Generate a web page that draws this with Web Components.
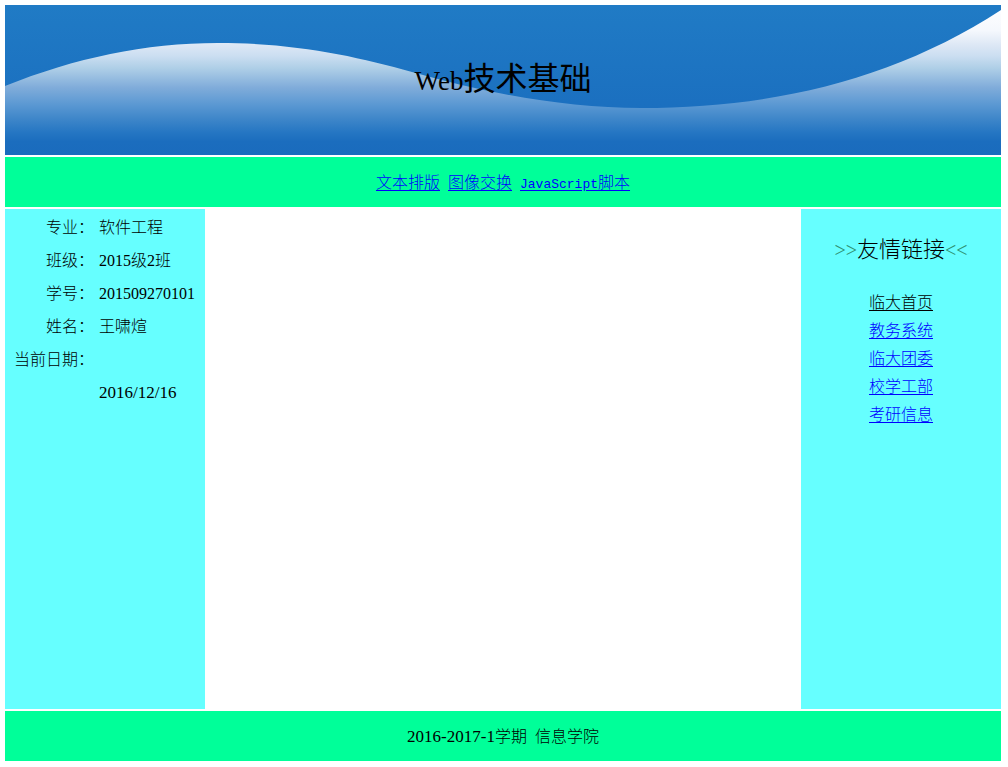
<!DOCTYPE html>
<html lang="zh-CN">
<head>
<meta charset="utf-8">
<title>Web技术基础</title>
<style>
body {
  margin: 0;
  background: #fff;
  color: #000;
  font: 300 16px/20px "Liberation Serif", "Noto Sans CJK SC", serif;
}
</style>
</head>
<body>
<course-page>
  <page-banner slot="banner"><span slot="latin">Web</span>技术基础</page-banner>
  <page-nav slot="nav"></page-nav>
  <student-card slot="left"></student-card>
  <friend-links slot="right"></friend-links>
  <page-footer slot="footer"><span slot="term">2016-2017-1</span>信息学院</page-footer>
</course-page>

<script>
function define(name, html) {
  const template = document.createElement('template');
  template.innerHTML = html;
  customElements.define(name, class extends HTMLElement {
    constructor() {
      super();
      this.attachShadow({ mode: 'open' }).append(template.content.cloneNode(true));
    }
  });
}

define('course-page', `
<style>
  :host { display: flex; flex-direction: column; gap: 2px; box-sizing: border-box; min-height: 100vh; padding: 5px 7px 6px 5px; }
  .columns { display: grid; grid-template-columns: 200px 1fr 200px; flex: 1; }
</style>
<slot name="banner"></slot>
<slot name="nav"></slot>
<div class="columns">
  <slot name="left"></slot>
  <main></main>
  <slot name="right"></slot>
</div>
<slot name="footer"></slot>`);

define('page-banner', `
<style>
  :host { display: grid; place-items: center; position: relative; height: 150px; }
  svg { position: absolute; inset: 0; width: 100%; height: 100%; }
  h1 { position: relative; margin: 0; font-size: 32px; line-height: 40px; font-weight: 400; }
  ::slotted(span) { font-size: 27px; }
</style>
<svg viewBox="0 0 996 150" preserveAspectRatio="none" aria-hidden="true">
  <defs>
    <linearGradient id="sky" x1="0" y1="0" x2="0" y2="1">
      <stop offset="0" stop-color="#207bc5"/><stop offset=".65" stop-color="#1b70c0"/><stop offset="1" stop-color="#1a6bbd"/>
    </linearGradient>
    <linearGradient id="wave" gradientUnits="userSpaceOnUse" x1="0" y1="0" x2="0" y2="150">
      <stop offset="0" stop-color="#fff"/><stop offset=".17" stop-color="#f5f8fd"/>
      <stop offset=".27" stop-color="#dce7f5"/><stop offset=".34" stop-color="#cbdef1"/>
      <stop offset=".42" stop-color="#afcfe7"/><stop offset=".55" stop-color="#80acda"/>
      <stop offset=".66" stop-color="#5c99d3"/><stop offset=".76" stop-color="#3e86c9"/>
      <stop offset=".85" stop-color="#2576c3"/><stop offset=".91" stop-color="#1b6dbe"/><stop offset="1" stop-color="#1a6bbd"/>
    </linearGradient>
  </defs>
  <path fill="url(#sky)" d="M0 0H996V150H0Z"/>
  <path fill="url(#wave)" d="M0 81C70 53 140 38 213 38C290 38 350 51 407 67C480 88 560 103 636 103C770 103 890 74 996 5V150H0Z"/>
</svg>
<h1><slot name="latin"></slot><slot></slot></h1>`);

define('page-nav', `
<style>
  :host { display: block; }
  nav { display: flex; justify-content: center; align-items: baseline; gap: 8px; box-sizing: border-box; height: 50px; padding-top: 16px; background: #0f9; }
  a { color: #00f; text-underline-offset: 2px; }
  span { font-family: "Liberation Mono", monospace; font-size: 13px; }
</style>
<nav>
  <a href="#text">文本排版</a>
  <a href="#image">图像交换</a>
  <a href="#script"><span>JavaScript</span>脚本</a>
</nav>`);

define('student-card', `
<style>
  :host { display: block; background: #6ff; }
  table { width: 100%; border-collapse: collapse; margin-top: 2px; }
  th, td { height: 33px; padding: 0; font-weight: inherit; white-space: nowrap; }
  th { width: 89px; text-align: right; }
  td { padding-left: 5px; }
  .date { font-size: 17px; }
</style>
<table>
  <tr><th scope="row">专业：</th><td>软件工程</td></tr>
  <tr><th scope="row">班级：</th><td>2015级2班</td></tr>
  <tr><th scope="row">学号：</th><td>201509270101</td></tr>
  <tr><th scope="row">姓名：</th><td>王啸煊</td></tr>
  <tr><th scope="row">当前日期：</th><td></td></tr>
  <tr><th></th><td class="date">2016/12/16</td></tr>
</table>`);

define('friend-links', `
<style>
  :host { display: block; background: #6ff; text-align: center; }
  h2 { margin: 26px 0 24px; font-size: 22px; line-height: 30px; font-weight: inherit; }
  span { font-size: 20px; color: #2f8f70; }
  ul { margin: 0; padding: 0; list-style: none; line-height: 28px; }
  a { color: #00f; text-underline-offset: 2px; }
  li:first-child a { color: #000; }
</style>
<h2><span>&gt;&gt;</span>友情链接<span>&lt;&lt;</span></h2>
<ul>
  <li><a href="#home">临大首页</a></li>
  <li><a href="#academic">教务系统</a></li>
  <li><a href="#league">临大团委</a></li>
  <li><a href="#students">校学工部</a></li>
  <li><a href="#postgraduate">考研信息</a></li>
</ul>`);

define('page-footer', `
<style>
  :host { display: block; }
  footer { display: flex; justify-content: center; align-items: baseline; gap: 8px; box-sizing: border-box; height: 50px; padding-top: 16px; background: #0f9; }
  ::slotted(span) { font-size: 17px; }
</style>
<footer><div><slot name="term"></slot>学期</div><div><slot></slot></div></footer>`);
</script>
</body>
</html>
